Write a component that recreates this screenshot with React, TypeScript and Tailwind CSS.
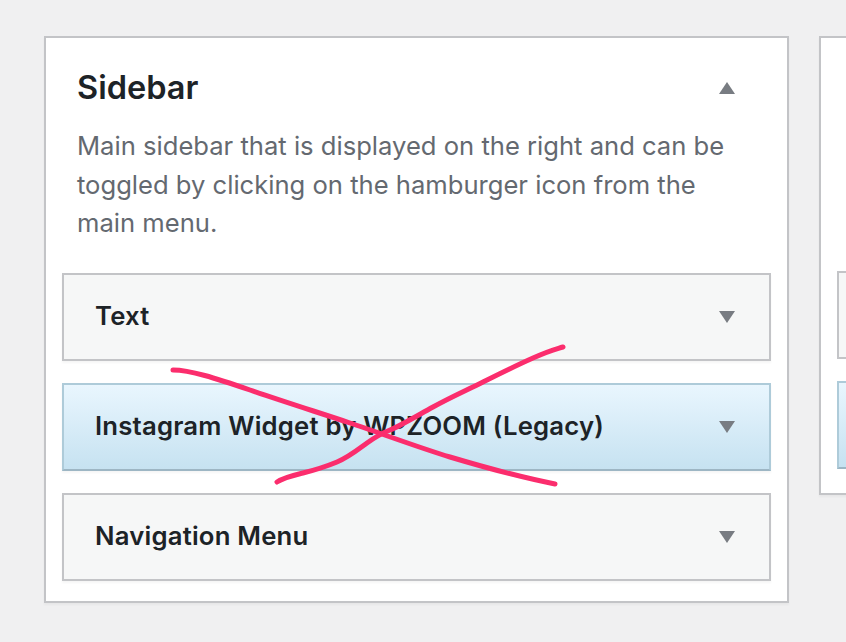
import React from "react";

const font = { fontFamily: 'Inter, "Noto Sans", "Liberation Sans", sans-serif' };

function Arrow({ up = false }: { up?: boolean }) {
  return (
    <svg width="16" height="12" viewBox="0 0 16 12" className="shrink-0">
      {up ? <path d="M8 0 L16 12 L0 12 Z" fill="#787c82" /> : <path d="M0 0 L16 0 L8 12 Z" fill="#787c82" />}
    </svg>
  );
}

function Widget({ title, active = false }: { title: string; active?: boolean }) {
  return (
    <div
      className={
        active
          ? "flex h-[88px] items-center justify-between border-2 border-[#aecbd9] border-b-[#9db6c4] bg-gradient-to-b from-[#e9f6fe] to-[#c6e2f1] pl-[31px] pr-[34px] shadow-[0_2px_2px_rgba(0,0,0,0.04)]"
          : "flex h-[88px] items-center justify-between border-2 border-[#c3c4c7] bg-[#f6f7f7] pl-[31px] pr-[34px] shadow-[0_2px_2px_rgba(0,0,0,0.04)]"
      }
    >
      <span className="text-[25.7px] font-semibold tracking-[0.2px] text-[#1d2327]">{title}</span>
      <Arrow />
    </div>
  );
}

export default function App() {
  return (
    <div className="relative h-[642px] w-[846px] overflow-hidden bg-[#f0f0f1]" style={font}>
      <div className="flex items-start gap-[30px] pl-[44px] pt-[36px]">
        <div className="w-[745px] shrink-0 border-2 border-[#c3c4c7] bg-white px-4 pb-5 shadow-[0_2px_2px_rgba(0,0,0,0.04)]">
          <div className="flex items-center justify-between pl-[15px] pr-[36px] pt-[30px]">
            <h2 className="text-[32.5px] font-semibold leading-[40px] text-[#1d2327]">Sidebar</h2>
            <Arrow up />
          </div>
          <p className="mt-[19px] pl-[15px] pr-[40px] text-[25.6px] leading-[38.5px] text-[#646970]">
            Main sidebar that is displayed on the right and can be toggled by clicking on the hamburger icon from the
            main menu.
          </p>
          <div className="mt-[30px] flex flex-col gap-[22px]">
            <Widget title="Text" />
            <Widget title="Instagram Widget by WPZOOM (Legacy)" active />
            <Widget title="Navigation Menu" />
          </div>
        </div>
        <div className="h-[459px] w-[300px] shrink-0 border-2 border-[#c3c4c7] bg-white px-4 pt-[233px] shadow-[0_2px_2px_rgba(0,0,0,0.04)]">
          <div className="flex flex-col gap-[22px]">
            <div className="h-[88px] border-2 border-[#c3c4c7] bg-[#f6f7f7]" />
            <div className="h-[88px] border-2 border-[#aecbd9] border-b-[#9db6c4] bg-gradient-to-b from-[#e9f6fe] to-[#c6e2f1]" />
          </div>
        </div>
      </div>
      {/* hand-drawn cross over the legacy widget */}
      <svg className="pointer-events-none absolute left-0 top-0" width="846" height="642" viewBox="0 0 846 642">
        <path
          d="M173 370 C 190 370, 215 378, 250 390 S 320 413, 350 423 S 420 448, 450 457 S 520 477, 555 484"
          fill="none"
          stroke="#fb2d6d"
          strokeWidth="5"
          strokeLinecap="round"
        />
        <path
          d="M277 482 C 285 477, 295 475, 303 473 S 325 467, 337 462 S 360 448, 367 443 S 380 434, 390 430 S 415 417, 433 407 S 465 391, 483 382 S 515 366, 533 358 S 553 350, 563 347"
          fill="none"
          stroke="#fb2d6d"
          strokeWidth="5"
          strokeLinecap="round"
        />
      </svg>
    </div>
  );
}
